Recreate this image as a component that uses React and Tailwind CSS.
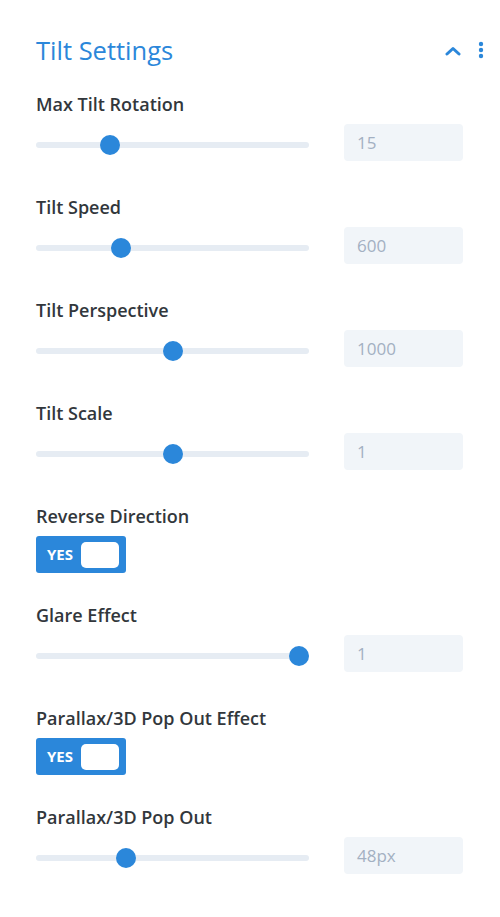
import React from 'react';

const fields = [
    { type: 'range', label: 'Max Tilt Rotation', value: '15', pct: 25.3 },
    { type: 'range', label: 'Tilt Speed', value: '600', pct: 29.6 },
    { type: 'range', label: 'Tilt Perspective', value: '1000', pct: 50.2 },
    { type: 'range', label: 'Tilt Scale', value: '1', pct: 50.2 },
    { type: 'toggle', label: 'Reverse Direction' },
    { type: 'range', label: 'Glare Effect', value: '1', pct: 100 },
    { type: 'toggle', label: 'Parallax/3D Pop Out Effect' },
    { type: 'range', label: 'Parallax/3D Pop Out', value: '48px', pct: 31.6 },
];

const RangeRow = ({ value, pct }) => (
    <div className="flex h-[37px] items-center">
        <div className="relative mt-[5px] h-[6px] w-[273px] rounded-full bg-[#e6ecf3]">
            {/* thumb travels over the track minus its own width */}
            <div
                className="absolute top-1/2 h-5 w-5 -translate-y-1/2 rounded-full bg-[#2b87da]"
                style={{ left: `calc(${pct / 100} * (100% - 20px))` }}
            />
        </div>
        <div className="ml-[35px] flex h-[37px] w-[119px] items-center rounded-[4px] bg-[#f1f5f9] pl-[13px] text-[17px] text-[#a3b0c2]">
            {value}
        </div>
    </div>
);

const Toggle = () => (
    <div className="flex h-[37px] w-[90px] items-center justify-between rounded-[3px] bg-[#2b87da] pl-[11px] pr-[7px]">
        <span className="text-[15px] font-bold text-white">YES</span>
        <span className="h-[26px] w-[38px] rounded-[5px] bg-white" />
    </div>
);

const App = () => {
    return (
        <div className="min-h-[917px] w-[500px] bg-white pl-[36px] pr-[37px] pt-[32px] font-['Open_Sans',sans-serif]">
            <div className="flex h-[36px] items-center justify-between">
                <h1 className="text-[25.5px] leading-[36px] text-[#2b87da]">Tilt Settings</h1>
                <div className="-mr-[21px] flex items-center gap-[17px]">
                    <svg width="16" height="10" viewBox="0 0 16 10" className="mt-[1px]">
                        <path d="M2 8 L8 2.5 L14 8" fill="none" stroke="#2b87da" strokeWidth="3" strokeLinecap="round" strokeLinejoin="round" />
                    </svg>
                    <svg width="6" height="18" viewBox="0 0 6 18">
                        <circle cx="3" cy="3" r="2.2" fill="#2b87da" />
                        <circle cx="3" cy="9" r="2.2" fill="#2b87da" />
                        <circle cx="3" cy="15" r="2.2" fill="#2b87da" />
                    </svg>
                </div>
            </div>

            <div className="mt-[24px]">
                {fields.map((f, i) => (
                    <div key={i} className={f.type === 'toggle' ? 'mb-[30px]' : 'mb-[34px]'}>
                        <div className="text-[18px] font-semibold leading-[24px] text-[#32373c]">{f.label}</div>
                        <div className="mt-[8px]">
                            {f.type === 'toggle' ? <Toggle /> : <RangeRow value={f.value} pct={f.pct} />}
                        </div>
                    </div>
                ))}
            </div>
        </div>
    );
};

export default App;
